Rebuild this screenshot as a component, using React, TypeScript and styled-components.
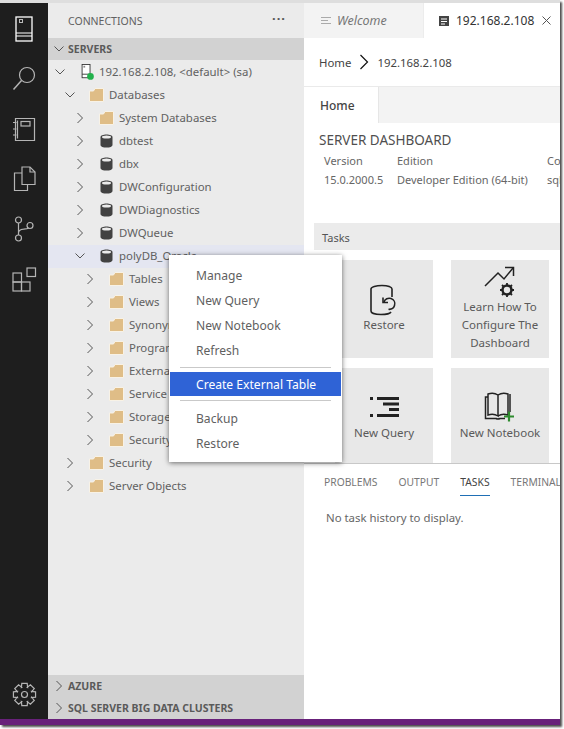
import React from "react";
import styled, { createGlobalStyle } from "styled-components";

const Global = createGlobalStyle`
  html, body { margin: 0; padding: 0; background: #fff; }
  body { font-family: "Noto Sans", "Open Sans", sans-serif; width: 564px; height: 729px; overflow: hidden; }
  * { box-sizing: border-box; }
`;

const Frame = styled.div`
  position: relative;
  width: 560px;
  height: 725px;
  display: flex;
  flex-direction: column;
  background: #fff;
  box-shadow: 2px 2px 2px rgba(0, 0, 0, 0.7);
`;
const TopBand = styled.div`height: 3px; background: #dedede; flex: none;`;
const Body = styled.div`flex: 1; display: flex; min-height: 0;`;
const StatusBar = styled.div`height: 6px; background: #68217a; flex: none;`;

const Activity = styled.nav`
  width: 48px;
  flex: none;
  background: #1e1e1e;
  display: flex;
  flex-direction: column;
  align-items: center;
  padding-top: 1px;
`;
const ActivitySlot = styled.div`
  width: 48px;
  height: 50px;
  display: flex;
  align-items: center;
  justify-content: center;
`;
const ActivitySpacer = styled.div`flex: 1;`;

const Sidebar = styled.aside`
  width: 256px;
  flex: none;
  background: #ebebeb;
  display: flex;
  flex-direction: column;
  color: #616161;
`;
const ConnHeader = styled.div`
  height: 35px;
  display: flex;
  align-items: center;
  justify-content: space-between;
  padding: 1px 18px 0 20px;
  font-size: 10.5px;
`;
const Dots = styled.span`font-size: 13px; font-weight: 700; letter-spacing: 1px; color: #555; margin-top: -6px;`;
const SectionHead = styled.div`
  height: 22px;
  background: #d2d2d2;
  display: flex;
  align-items: center;
  font-size: 10.5px;
  font-weight: 700;
  color: #5a5a5a;
  padding-left: 5px;
  gap: 3px;
`;
const Tree = styled.div`flex: 1; padding-top: 1px;`;
const Row = styled.div<{ $depth: number; $hi?: boolean }>`
  height: 23px;
  display: flex;
  align-items: center;
  padding-left: ${(p) => 4 + p.$depth * 10}px;
  padding-bottom: 2px;
  background: ${(p) => (p.$hi ? "#e4e6f1" : "transparent")};
  font-size: 11.4px;
  white-space: nowrap;
`;
const ChevBox = styled.span`
  width: 16px;
  margin-right: 11px;
  flex: none;
  display: flex;
  align-items: center;
  justify-content: center;
`;
const IconBox = styled.span`
  width: 15px;
  margin-right: 5px;
  flex: none;
  display: flex;
  align-items: center;
  justify-content: center;
`;

const Main = styled.main`
  flex: 1;
  min-width: 0;
  display: flex;
  flex-direction: column;
  overflow: hidden;
  color: #555;
`;
const TabBar = styled.div`height: 35px; display: flex; flex: none; background: #f3f3f3;`;
const EditorTab = styled.div<{ $active?: boolean }>`
  width: ${(p) => (p.$active ? "136px" : "120px")};
  display: flex;
  align-items: center;
  gap: 6px;
  padding-left: ${(p) => (p.$active ? "14px" : "17px")};
  background: ${(p) => (p.$active ? "#fff" : "#f3f3f3")};
  border-right: ${(p) => (p.$active ? "none" : "1px solid #ececec")};
  font-size: ${(p) => (p.$active ? "12px" : "12.5px")};
  color: ${(p) => (p.$active ? "#333" : "#777")};
  font-style: ${(p) => (p.$active ? "normal" : "italic")};
  white-space: nowrap;
`;
const CloseMark = styled.span`margin-left: 2px; display: flex;`;
const Crumbs = styled.div`
  height: 49px;
  flex: none;
  display: flex;
  align-items: center;
  padding: 0 0 0 15px;
  font-size: 11.4px;
  color: #444;
  gap: 8px;
  border-bottom: 1px solid #eaeaea;
`;
const SubTabs = styled.div`height: 36px; flex: none; display: flex; background: #f3f3f3;`;
const SubTab = styled.div`
  width: 75px;
  display: flex;
  align-items: center;
  padding-left: 16px;
  background: #fff;
  font-size: 12px;
  font-weight: 500;
  color: #444;
  border-right: 1px solid #e6e6e6;
`;
const DashTitle = styled.div`
  margin: 8px 0 0 15px;
  font-size: 13.5px;
  line-height: 18px;
  color: #4f4f4f;
  white-space: nowrap;
`;
const Props = styled.div`
  display: grid;
  grid-template-columns: 73px 150px 60px;
  margin: 2px 0 0 20px;
  font-size: 11px;
  line-height: 19px;
  color: #666;
  white-space: nowrap;
`;
const TasksHead = styled.div`
  margin: 34px 0 0 10px;
  height: 27px;
  flex: none;
  display: flex;
  align-items: center;
  padding: 2px 0 0 8px;
  background: #ebebeb;
  font-size: 11px;
  color: #555;
`;
const Cards = styled.div`
  display: grid;
  grid-template-columns: 98px 98px;
  grid-auto-rows: 98px;
  gap: 10px 18px;
  padding: 10px 0 0 31px;
  height: 213px;
  flex: none;
  overflow: hidden;
`;
const Card = styled.div`
  background: #e8e8e8;
  display: flex;
  flex-direction: column;
  align-items: center;
  justify-content: flex-start;
  text-align: center;
  font-size: 11.5px;
  line-height: 18px;
  color: #5a5a5a;
  padding-top: 6px;
`;
const CardIcon = styled.div<{ $h: number; $gap: number }>`
  height: ${(p) => p.$h}px;
  flex: none;
  display: flex;
  align-items: flex-end;
  justify-content: center;
  padding-bottom: ${(p) => p.$gap}px;
`;
const Panel = styled.section`
  flex: 1;
  border-top: 1px solid #c8c8c8;
  background: #fff;
`;
const PanelTabs = styled.div`
  height: 32px;
  display: flex;
  gap: 21px;
  padding-left: 20px;
  font-size: 10.3px;
  color: #777;
  white-space: nowrap;
`;
const PanelTab = styled.div<{ $active?: boolean }>`
  height: 32px;
  display: flex;
  align-items: center;
  padding-top: 4px;
  color: ${(p) => (p.$active ? "#444" : "#777")};
  border-bottom: ${(p) => (p.$active ? "1px solid #1f6fb5" : "1px solid transparent")};
`;
const EmptyNote = styled.div`
  margin: 14px 0 0 22px;
  font-size: 11.4px;
  color: #666;
`;

const Menu = styled.div`
  position: absolute;
  left: 169px;
  top: 255px;
  width: 173px;
  height: 207px;
  background: #fff;
  padding: 8px 1px 6px;
  box-shadow: 0 1px 5px rgba(0, 0, 0, 0.55);
  color: #5f5f5f;
  font-size: 12.1px;
`;
const MenuItem = styled.div<{ $active?: boolean }>`
  height: ${(p) => (p.$active ? "24px" : "25px")};
  display: flex;
  align-items: center;
  padding-left: 26px;
  background: ${(p) => (p.$active ? "#2f63d6" : "transparent")};
  color: ${(p) => (p.$active ? "#fff" : "inherit")};
`;
const MenuSep = styled.div<{ $after: number }>`
  height: 1px;
  background: #c9c9c9;
  margin: 4px 10px ${(p) => p.$after}px;
`;

const Chevron = ({ open, color = "#555" }: { open?: boolean; color?: string }) => (
  <svg width="12" height="12" viewBox="0 0 12 12" fill="none" stroke={color} strokeWidth="1">
    {open ? <path d="M1.5 3.5 6 8l4.5-4.5" /> : <path d="M3.5 1 8.5 6l-5 5" />}
  </svg>
);

const Folder = () => (
  <svg width="15" height="14" viewBox="0 0 15 14">
    <path d="M.5 3V13.500H14.500V.5H6L4.500 3Z" fill="#dfbd87" stroke="#f8f2e6" strokeWidth="1" />
  </svg>
);

const Db = () => (
  <svg width="13" height="14" viewBox="0 0 13 14">
    <path d="M.5 3v8c0 1.600 2.700 2.600 6 2.600s6-1 6-2.600V3C12.500 1.400 9.800.4 6.500.4S.5 1.400.5 3Z" fill="#424242" />
    <ellipse cx="6.500" cy="3" rx="4.500" ry="1.500" fill="#ebebeb" />
  </svg>
);

const ServerSmall = () => (
  <svg width="17" height="18" viewBox="0 0 17 18">
    <rect x="3.500" y=".5" width="9" height="15" fill="#fff" stroke="#333" />
    <rect x="5" y="2" width="2" height="2" fill="#888" />
    <path d="M3.500 11.500h9" stroke="#333" />
    <circle cx="13" cy="14" r="3.800" fill="#22b14c" />
  </svg>
);

const ico = { fill: "none", stroke: "#b5b5b5", strokeWidth: 1.2 };

const ActServer = () => (
  <svg width="18" height="26" viewBox="0 0 18 26">
    <rect x="1" y="1" width="16" height="24" fill="#1e1e1e" stroke="#fff" strokeWidth="1.300" />
    <rect x="4.500" y="3.500" width="3" height="3" fill="none" stroke="#bbb" />
    <path d="M1 17h16M1 20h16" stroke="#fff" strokeWidth="1.200" />
  </svg>
);
const ActSearch = () => (
  <svg width="24" height="26" viewBox="0 0 24 26" {...ico}>
    <circle cx="15" cy="9" r="7.500" />
    <path d="M9.500 14.500 1.500 23.500" strokeWidth="1.500" />
  </svg>
);
const ActBook = () => (
  <svg width="24" height="25" viewBox="0 0 24 25" {...ico}>
    <path d="M3.500 1.500H22.500V23.500H3.500Z" />
    <path d="M5.500 3.500V21.500" />
    <rect x="9" y="4.500" width="9" height="4.500" />
    <path d="M1 5.500h3.500M1 12h3.500M1 18h3.500" />
  </svg>
);
const ActCopy = () => (
  <svg width="23" height="26" viewBox="0 0 23 26" {...ico}>
    <path d="M9 1H17L22 6V18.500H9Z" />
    <path d="M17 1V6H22" />
    <path d="M9 7H1.500V24.500H14.500V18.500" />
  </svg>
);
const ActBranch = () => (
  <svg width="20" height="26" viewBox="0 0 20 26" {...ico}>
    <circle cx="4.500" cy="4" r="3" />
    <circle cx="4.500" cy="22" r="3" />
    <circle cx="16" cy="9.500" r="3" />
    <path d="M4.500 7V19M4.500 17c0-3 2-3.500 5-3.800 3-.4 4.500-.8 5.300-1.300" />
  </svg>
);
const ActExt = () => (
  <svg width="25" height="25" viewBox="0 0 25 25" {...ico}>
    <rect x="1" y="6" width="8.500" height="9" />
    <rect x="1" y="15" width="8.500" height="9" />
    <rect x="9.500" y="15" width="8.500" height="9" />
    <rect x="15" y="1" width="8.500" height="8.500" />
  </svg>
);
const gearPath = (() => {
  const c = 12.5;
  const pts: string[] = [];
  for (let i = 0; i < 8; i++) {
    const a = (i * Math.PI) / 4;
    [
      [-0.42, 7.6],
      [-0.24, 11.4],
      [0.24, 11.4],
      [0.42, 7.6],
    ].forEach(([d, r]) => {
      pts.push(`${(c + r * Math.sin(a + d)).toFixed(2)} ${(c - r * Math.cos(a + d)).toFixed(2)}`);
    });
  }
  return `M${pts.join("L")}Z`;
})();
const ActGear = () => (
  <svg width="25" height="25" viewBox="0 0 25 25" {...ico}>
    <circle cx="12.500" cy="12.500" r="3" />
    <path d={gearPath} />
  </svg>
);

const RestoreIcon = () => (
  <svg width="32" height="32" viewBox="0 0 32 32" fill="none" stroke="#222" strokeWidth="1.600">
    <path d="M24 13V5c0-2-4-3.500-10-3.500S3 3 3 5v22c0 2 4 3.500 10 3.500 5 0 9-1 10-2.500" />
    <path d="M16 18c1-3 4-4.500 7-3.500 3 1 4.500 4 3.500 7-.8 2.600-3.300 4-6 3.800" />
    <path d="M15 13.500v5h5" />
  </svg>
);
const ConfigIcon = () => (
  <svg width="32" height="32" viewBox="0 0 32 32" fill="none" stroke="#222" strokeWidth="1.500">
    <path d="M1 20 14 7l6 6L29 2" />
    <path d="M21 1.500h8.500V10" />
    <circle cx="23" cy="24" r="4.500" strokeWidth="2.500" />
    <path d="M23 17v3M23 28v3M16 24h3M27 24h3M18 19l2 2M26 27l2 2M28 19l-2 2M20 27l-2 2" strokeWidth="1.800" />
  </svg>
);
const QueryIcon = () => (
  <svg width="30" height="22" viewBox="0 0 30 22" fill="#222">
    <rect x="1" y="1" width="3" height="3" />
    <rect x="8" y="1" width="22" height="3" />
    <rect x="14" y="6.500" width="16" height="3" />
    <rect x="20" y="12" width="10" height="3" />
    <rect x="1" y="18" width="3" height="3" />
    <rect x="8" y="18" width="22" height="3" />
  </svg>
);
const NotebookIcon = () => (
  <svg width="32" height="30" viewBox="0 0 32 30" fill="none" stroke="#222" strokeWidth="1.500">
    <path d="M14 24C11 22 7 22 4 23V2c3-1 7-1 10 1v21ZM14 3c3-2 7-2 10-1v21c-3-1-7-1-10 1" />
    <path d="M4 5H1.500v21.500H12c1 .6 3 .6 4 0h5" />
    <path d="M26 2v18" />
    <path d="M25 19.500v10M20 24.500h10" stroke="#2e8b2e" strokeWidth="2.200" />
  </svg>
);

const dbRow = (name: string, hi?: boolean, open?: boolean) => ({ name, depth: 2, kind: "db", hi, open });
const rows: { name: string; depth: number; kind: string; hi?: boolean; open?: boolean }[] = [
  { name: "192.168.2.108, <default> (sa)", depth: 0, kind: "server", open: true },
  { name: "Databases", depth: 1, kind: "folder", open: true },
  { name: "System Databases", depth: 2, kind: "folder" },
  dbRow("dbtest"),
  dbRow("dbx"),
  dbRow("DWConfiguration"),
  dbRow("DWDiagnostics"),
  dbRow("DWQueue"),
  dbRow("polyDB_Oracle", true, true),
  ...["Tables", "Views", "Synonyms", "Programmability", "External Resources", "Service Broker", "Storage", "Security"].map((name) => ({
    name,
    depth: 3,
    kind: "folder",
  })),
  { name: "Security", depth: 1, kind: "folder" },
  { name: "Server Objects", depth: 1, kind: "folder" },
];

export default function App() {
  return (
    <>
      <Global />
      <Frame>
        <TopBand />
        <Body>
          <Activity>
            <ActivitySlot><ActServer /></ActivitySlot>
            <ActivitySlot><ActSearch /></ActivitySlot>
            <ActivitySlot><ActBook /></ActivitySlot>
            <ActivitySlot><ActCopy /></ActivitySlot>
            <ActivitySlot><ActBranch /></ActivitySlot>
            <ActivitySlot><ActExt /></ActivitySlot>
            <ActivitySpacer />
            <ActivitySlot><ActGear /></ActivitySlot>
          </Activity>
          <Sidebar>
            <ConnHeader>
              <span>CONNECTIONS</span>
              <Dots>···</Dots>
            </ConnHeader>
            <SectionHead><Chevron open />SERVERS</SectionHead>
            <Tree>
              {rows.map((r, i) => (
                <Row key={i} $depth={r.depth} $hi={r.hi}>
                  <ChevBox><Chevron open={r.open} /></ChevBox>
                  <IconBox>
                    {r.kind === "folder" ? <Folder /> : r.kind === "db" ? <Db /> : <ServerSmall />}
                  </IconBox>
                  {r.name}
                </Row>
              ))}
            </Tree>
            <SectionHead><Chevron />AZURE</SectionHead>
            <SectionHead><Chevron />SQL SERVER BIG DATA CLUSTERS</SectionHead>
          </Sidebar>
          <Main>
            <TabBar>
              <EditorTab>
                <svg width="10" height="8" viewBox="0 0 10 8" stroke="#aaa"><path d="M0 .5h10M0 3.500h7M0 6.500h10" /></svg>
                Welcome
              </EditorTab>
              <EditorTab $active>
                <svg width="12" height="12" viewBox="0 0 12 12"><rect x="1" y="1" width="10" height="10" fill="#444" /><path d="M3 4h6M3 6.500h6M3 9h4" stroke="#fff" /></svg>
                192.168.2.108
                <CloseMark>
                  <svg width="9" height="9" viewBox="0 0 9 9" stroke="#555"><path d="M.5.500l8 8M8.500.500l-8 8" /></svg>
                </CloseMark>
              </EditorTab>
            </TabBar>
            <Crumbs>
              Home
              <svg width="10" height="16" viewBox="0 0 10 16" fill="none" stroke="#111" strokeWidth="1.200"><path d="M1.500 1 8.500 8l-7 7" /></svg>
              192.168.2.108
            </Crumbs>
            <SubTabs><SubTab>Home</SubTab></SubTabs>
            <DashTitle>SERVER DASHBOARD</DashTitle>
            <Props>
              <span>Version</span><span>Edition</span><span>Computer</span>
              <span>15.0.2000.5</span><span>Developer Edition (64-bit)</span><span>sqlserver</span>
            </Props>
            <TasksHead>Tasks</TasksHead>
            <Cards>
              <Card>
                <CardIcon $h={50} $gap={0}><RestoreIcon /></CardIcon>
                <span>Restore</span>
              </Card>
              <Card>
                <CardIcon $h={32} $gap={0}><ConfigIcon /></CardIcon>
                <span>Learn How To Configure The Dashboard</span>
              </Card>
              <Card>
                <CardIcon $h={50} $gap={6}><QueryIcon /></CardIcon>
                <span>New Query</span>
              </Card>
              <Card>
                <CardIcon $h={50} $gap={2}><NotebookIcon /></CardIcon>
                <span>New Notebook</span>
              </Card>
            </Cards>
            <Panel>
              <PanelTabs>
                <PanelTab>PROBLEMS</PanelTab>
                <PanelTab>OUTPUT</PanelTab>
                <PanelTab $active>TASKS</PanelTab>
                <PanelTab>TERMINAL</PanelTab>
              </PanelTabs>
              <EmptyNote>No task history to display.</EmptyNote>
            </Panel>
          </Main>
        </Body>
        <StatusBar />
        <Menu>
          <MenuItem>Manage</MenuItem>
          <MenuItem>New Query</MenuItem>
          <MenuItem>New Notebook</MenuItem>
          <MenuItem>Refresh</MenuItem>
          <MenuSep $after={4} />
          <MenuItem $active>Create External Table</MenuItem>
          <MenuSep $after={5} />
          <MenuItem>Backup</MenuItem>
          <MenuItem>Restore</MenuItem>
        </Menu>
      </Frame>
    </>
  );
}
